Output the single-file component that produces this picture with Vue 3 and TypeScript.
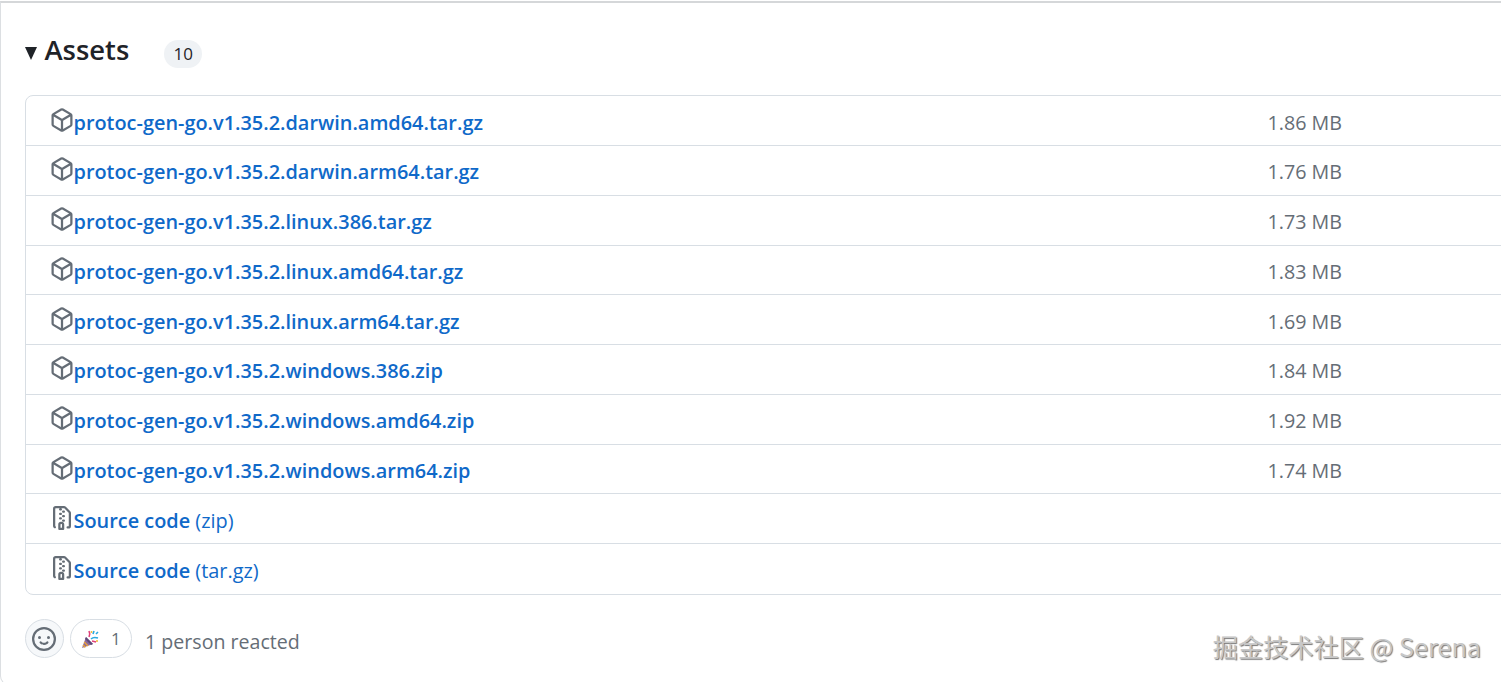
<script setup lang="ts">
interface Asset { name: string; size: string }
const assets: Asset[] = [
  { name: 'protoc-gen-go.v1.35.2.darwin.amd64.tar.gz', size: '1.86 MB' },
  { name: 'protoc-gen-go.v1.35.2.darwin.arm64.tar.gz', size: '1.76 MB' },
  { name: 'protoc-gen-go.v1.35.2.linux.386.tar.gz', size: '1.73 MB' },
  { name: 'protoc-gen-go.v1.35.2.linux.amd64.tar.gz', size: '1.83 MB' },
  { name: 'protoc-gen-go.v1.35.2.linux.arm64.tar.gz', size: '1.69 MB' },
  { name: 'protoc-gen-go.v1.35.2.windows.386.zip', size: '1.84 MB' },
  { name: 'protoc-gen-go.v1.35.2.windows.amd64.zip', size: '1.92 MB' },
  { name: 'protoc-gen-go.v1.35.2.windows.arm64.zip', size: '1.74 MB' },
]
const sources: string[] = ['(zip)', '(tar.gz)']
const pkg = 'm8.878.392 5.25 3.045c.54.314.872.89.872 1.514v6.098a1.75 1.75 0 0 1-.872 1.514l-5.25 3.045a1.75 1.75 0 0 1-1.756 0l-5.25-3.045A1.75 1.75 0 0 1 1 11.049V4.951c0-.624.332-1.201.872-1.514L7.122.392a1.75 1.75 0 0 1 1.756 0ZM7.875 1.69l-4.63 2.685L8 7.133l4.755-2.758-4.63-2.685a.248.248 0 0 0-.25 0ZM2.5 5.677v5.372c0 .09.047.171.125.216l4.625 2.683V8.432Zm6.25 8.271 4.625-2.683a.25.25 0 0 0 .125-.216V5.677L8.75 8.432Z'
const zip = 'M3.5 1.75v11.5c0 .09.048.173.126.217a.75.75 0 0 1-.752 1.298A1.748 1.748 0 0 1 2 13.25V1.75C2 .784 2.784 0 3.75 0h5.586c.464 0 .909.185 1.237.513l2.914 2.914c.329.328.513.773.513 1.237v8.586A1.75 1.75 0 0 1 12.25 15h-.5a.75.75 0 0 1 0-1.5h.5a.25.25 0 0 0 .25-.25V4.664a.25.25 0 0 0-.073-.177L9.513 1.573a.25.25 0 0 0-.177-.073H7.25a.75.75 0 0 1 0 1.5h-.5a.75.75 0 0 1 0-1.5h-3a.25.25 0 0 0-.25.25Zm3.75 8.75h.5c.966 0 1.75.784 1.75 1.75v3a.75.75 0 0 1-.75.75h-2.5a.75.75 0 0 1-.75-.75v-3c0-.966.784-1.75 1.75-1.75ZM6 5.25a.75.75 0 0 1 .75-.75h.5a.75.75 0 0 1 0 1.5h-.5A.75.75 0 0 1 6 5.25Zm.75 2.25h.5a.75.75 0 0 1 0 1.5h-.5a.75.75 0 0 1 0-1.5ZM8 6.75A.75.75 0 0 1 8.75 6h.5a.75.75 0 0 1 0 1.5h-.5A.75.75 0 0 1 8 6.75ZM8.75 3h.5a.75.75 0 0 1 0 1.5h-.5a.75.75 0 0 1 0-1.5ZM8 9.75A.75.75 0 0 1 8.75 9h.5a.75.75 0 0 1 0 1.5h-.5A.75.75 0 0 1 8 9.75Zm-1 2.5v2.25h1v-2.25a.25.25 0 0 0-.25-.25h-.5a.25.25 0 0 0-.25.25Z'
const smiley = 'M8 0a8 8 0 1 1 0 16A8 8 0 0 1 8 0ZM1.5 8a6.5 6.5 0 1 0 13 0 6.5 6.5 0 0 0-13 0Zm3.82 1.636a.75.75 0 0 1 1.038.175l.007.009c.103.118.22.222.35.31.264.178.683.37 1.285.37.602 0 1.02-.192 1.285-.371.13-.088.247-.192.35-.31l.007-.008a.75.75 0 0 1 1.222.87l-.022-.015c.02.013.021.015.021.015v.001l-.001.002-.002.003-.005.007-.014.019a2.066 2.066 0 0 1-.184.213c-.16.166-.338.316-.53.445-.63.418-1.37.638-2.127.629-.946 0-1.652-.308-2.126-.63a3.331 3.331 0 0 1-.715-.657l-.014-.02-.005-.006-.002-.003v-.002h-.001l.613-.432-.614.43a.75.75 0 0 1 .183-1.044ZM12 7a1 1 0 1 1-2 0 1 1 0 0 1 2 0ZM5 8a1 1 0 1 1 0-2 1 1 0 0 1 0 2Zm5.25 2.25.592.416a97.71 97.71 0 0 0-.592-.416Z'
</script>

<template>
  <div class="page">
    <div class="card">
      <div class="heading">
        <span class="caret"></span>
        <h3 class="title">Assets</h3>
        <span class="count">10</span>
      </div>
      <ul class="list">
        <li v-for="a in assets" :key="a.name" class="row">
          <span class="main">
            <svg class="icon" viewBox="0 0 16 16" width="24" height="24"><path :d="pkg" /></svg>
            <a class="link">{{ a.name }}</a>
          </span>
          <span class="size">{{ a.size }}</span>
        </li>
        <li v-for="s in sources" :key="s" class="row">
          <span class="main">
            <svg class="icon" viewBox="0 0 16 16" width="24" height="24"><path :d="zip" /></svg>
            <a class="link">Source code <span class="ext">{{ s }}</span></a>
          </span>
        </li>
      </ul>
      <div class="reactions">
        <button class="smile">
          <svg viewBox="0 0 16 16" width="24" height="24"><path :d="smiley" /></svg>
        </button>
        <button class="pill">
          <svg class="party" viewBox="0 0 20 20" width="20" height="20">
            <path d="M2 19 6 8l7 7z" fill="#8a6a9e" />
            <path d="M4.2 13 8 17M3 16l2.4 2.4" stroke="#e8a13a" stroke-width="1.5" />
            <path d="M6 8l7 7-2 1-6-6z" fill="#5c4a78" />
            <path d="M9 8c1-2 1-4 0-6" stroke="#e0407a" stroke-width="1.6" fill="none" />
            <path d="M11 10c2-2 4-2 7-1" stroke="#2aa8e0" stroke-width="1.6" fill="none" />
            <path d="M13 5l1-3M16 5l2-2" stroke="#2aa8e0" stroke-width="1.6" />
            <path d="M12 12l4 1" stroke="#e0407a" stroke-width="1.6" />
            <circle cx="11.5" cy="3" r="1" fill="#f2b632" />
            <circle cx="17" cy="12" r="1" fill="#f2b632" />
          </svg>
          <span>1</span>
        </button>
        <span class="who">1 person reacted</span>
      </div>
    </div>
    <div class="mark">掘金技术社区 @ Serena</div>
  </div>
</template>

<style>
html, body { margin: 0; background: #fff; overflow: hidden; }
</style>

<style scoped>
.page {
  position: relative;
  width: 1501px;
  height: 682px;
  overflow: hidden;
  padding-top: 1px;
  box-sizing: border-box;
  font-family: "Open Sans", "Noto Sans", "Noto Sans CJK SC", sans-serif;
}
.card {
  box-sizing: border-box;
  width: 1600px;
  height: 684px;
  border: 1px solid #dcdfe2;
  border-top: 2px solid #d5d7d9;
  border-radius: 0 0 0 9px;
  padding: 0 24px;
}
.heading {
  display: flex;
  align-items: center;
  height: 92px;
  padding-top: 5px;
  box-sizing: border-box;
}
.caret {
  width: 0;
  height: 0;
  border-left: 6.75px solid transparent;
  border-right: 6.75px solid transparent;
  border-top: 13px solid #1f2328;
  margin-right: 7.5px;
  margin-top: 4px;
}
.title {
  margin: 0 0 4px;
  font-size: 27.4px;
  font-weight: 600;
  color: #1f2328;
  line-height: 36px;
}
.count {
  margin-left: 35px;
  width: 38px;
  height: 28px;
  margin-top: 4px;
  border-radius: 14px;
  background: #eff2f5;
  color: #1f2328;
  font-size: 17px;
  line-height: 28px;
  text-align: center;
}
.list {
  list-style: none;
  margin: 0;
  padding: 0;
  width: 1540px;
  border: 1px solid #d8dee4;
  border-radius: 8px;
}
.row {
  box-sizing: border-box;
  height: 49.75px;
  display: grid;
  grid-template-columns: 1218px 200px;
  align-items: center;
  padding-left: 23.5px;
  border-top: 1px solid #d8dee4;
}
.row:first-child { border-top: none; height: 49px; }
.row:last-child { height: 51px; }
.main { display: flex; align-items: center; }
.icon { fill: #656d76; margin-top: -2px; flex: none; }
.link {
  font-size: 19.9px;
  font-weight: 600;
  color: #0f69c9;
  white-space: nowrap;
  padding-top: 3px;
}
.ext { font-weight: 400; }
.size { font-size: 19.7px; color: #656d76; padding-top: 3px; }
.reactions {
  display: flex;
  align-items: center;
  margin-top: 24px;
}
.smile {
  box-sizing: border-box;
  width: 39px;
  height: 39px;
  padding: 0 1px 0 0;
  border-radius: 50%;
  border: 1px solid #d8dee4;
  background: #f6f8fa;
  display: flex;
  align-items: center;
  justify-content: center;
}
.smile svg { fill: #656d76; }
.pill {
  box-sizing: border-box;
  width: 62px;
  height: 39px;
  margin-left: 6px;
  padding: 0 0 0 9px;
  border-radius: 20px;
  border: 1px solid #d8dee4;
  background: #fff;
  display: flex;
  align-items: center;
  gap: 11px;
  color: #656d76;
  font-family: inherit;
  font-size: 17px;
}
.who {
  margin-left: 13px;
  font-size: 19.6px;
  color: #656d76;
  padding-top: 6px;
}
.mark {
  position: absolute;
  right: 20px;
  top: 628px;
  font-family: "Noto Sans CJK SC", "Noto Sans", sans-serif;
  font-size: 25.2px;
  line-height: 36px;
  color: #c8c8c8;
  text-shadow: 1px 1px 1px #777;
  white-space: nowrap;
}
</style>
